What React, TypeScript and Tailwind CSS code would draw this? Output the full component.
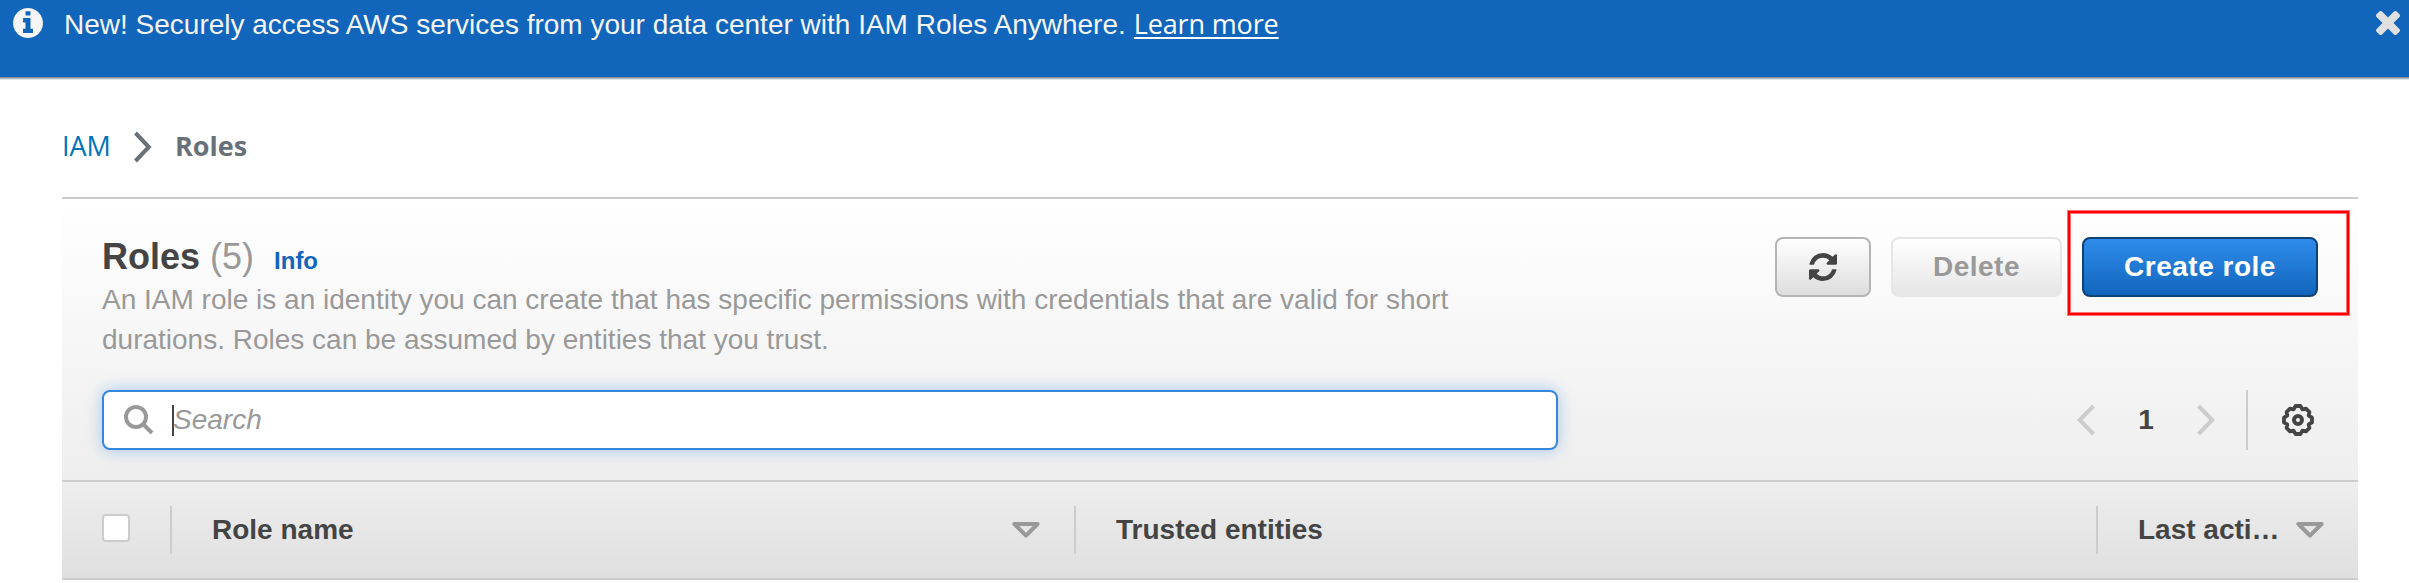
import type { ReactNode } from "react";

function InfoCircle() {
  return (
    <svg className="h-[30px] w-[30px] shrink-0" viewBox="128 128 1536 1536" fill="#f5f5f5">
      <path d="M1152 1376v-160q0-14-9-23t-23-9h-96v-512q0-14-9-23t-23-9h-320q-14 0-23 9t-9 23v160q0 14 9 23t23 9h96v320h-96q-14 0-23 9t-9 23v160q0 14 9 23t23 9h448q14 0 23-9t9-23zm-128-896v-160q0-14-9-23t-23-9h-192q-14 0-23 9t-9 23v160q0 14 9 23t23 9h192q14 0 23-9t9-23zm640 416q0 209-103 385.5t-279.5 279.5-385.5 103-385.5-103-279.5-279.5-103-385.5 103-385.5 279.5-279.5 385.5-103 385.5 103 279.5 279.5 103 385.5z" />
    </svg>
  );
}

function CloseIcon() {
  return (
    <svg className="h-6 w-6" viewBox="302 366 1188 1188" fill="#e0e0e0">
      <path d="M1490 1322q0 40-28 68l-136 136q-28 28-68 28t-68-28l-294-294-294 294q-28 28-68 28t-68-28l-136-136q-28-28-28-68t28-68l294-294-294-294q-28-28-28-68t28-68l136-136q28-28 68-28t68 28l294 294 294-294q28-28 68-28t68 28l136 136q28 28 28 68t-28 68l-294 294 294 294q28 28 28 68z" />
    </svg>
  );
}

function RefreshIcon() {
  return (
    <svg className="h-7 w-7" viewBox="0 0 1536 1536" fill="#444">
      <path d="M1511 928q0 5-1 7-64 268-268 434.5t-478 166.5q-146 0-282.5-55t-243.5-157l-129 129q-19 19-45 19t-45-19-19-45v-448q0-26 19-45t45-19h448q26 0 45 19t19 45-19 45l-137 137q71 66 161 102t187 36q134 0 250-65t186-179q11-17 53-117 8-23 30-23h192q13 0 22.5 9.5t9.5 22.5zm25-800v448q0 26-19 45t-45 19h-448q-26 0-45-19t-19-45 19-45l138-138q-148-137-349-137-134 0-250 65t-186 179q-11 17-53 117-8 23-30 23h-199q-13 0-22.5-9.5t-9.5-22.5v-7q65-268 270-434.5t480-166.5q146 0 284 55.5t245 156.5l130-129q19-19 45-19t45 19 19 45z" />
    </svg>
  );
}

function Chevron({ left = false }: { left?: boolean }) {
  return (
    <svg className="h-8 w-[18px]" viewBox="0 0 18 32" fill="none" stroke="#ccc" strokeWidth="4">
      <path d={left ? "M16.5 2L2.8 16L16.5 30" : "M1.5 2L15.2 16L1.5 30"} />
    </svg>
  );
}

function GearIcon() {
  return (
    <svg className="h-8 w-8" viewBox="0 0 32 32" fill="none" stroke="#444">
      <circle cx="16" cy="16" r="4" strokeWidth="4" />
      <path
        strokeWidth="3.8"
        strokeLinejoin="round"
        d="M13.6 2H18.4L20.4 5.3L24 4.6L27.4 8L26.7 11.6L30 13.6V18.4L26.7 20.4L27.4 24L24 27.4L20.4 26.7L18.4 30H13.6L11.6 26.7L8 27.4L4.6 24L5.3 20.4L2 18.4V13.6L5.3 11.6L4.6 8L8 4.6L11.6 5.3Z"
      />
    </svg>
  );
}

function SortIcon() {
  return (
    <svg className="h-4 w-7 shrink-0" viewBox="0 0 28 16" fill="none" stroke="#999" strokeWidth="4" strokeLinejoin="round">
      <path d="M2.4 2H25.6L14 13.6Z" />
    </svg>
  );
}

function Divider() {
  return <div className="h-12 w-[2px] shrink-0 bg-[#ccc]" />;
}

function HeaderLabel({ children }: { children: ReactNode }) {
  return <span className="text-[28px] leading-8 font-bold whitespace-nowrap">{children}</span>;
}

export default function App() {
  return (
    <div className="h-[583px] w-[2409px] overflow-hidden bg-white font-['Liberation_Sans',Arial,sans-serif] text-[#444]">
      <header className="flex h-[77px] items-start justify-between bg-[#1166bb] pr-[9px] pl-[13px] shadow-[0_1px_0_#879196,0_2px_0_#b4bcc0,0_3px_0_#e4e7e8]">
        <div className="flex pt-2 text-[#f5f5f5]">
          <InfoCircle />
          <p className="mt-px ml-[21px] text-[28px] leading-8 whitespace-nowrap">
            <span>New! Securely access AWS services from your data center with IAM Roles Anywhere.</span>
            <a className="ml-2 font-['Open_Sans','Noto_Sans',sans-serif] text-[27px] leading-none tracking-[-0.15px] text-white underline decoration-2 underline-offset-3">Learn more</a>
          </p>
        </div>
        <button className="mt-[11px]" aria-label="Dismiss">
          <CloseIcon />
        </button>
      </header>

      <nav className="flex h-[120px] items-center pt-[20px] pl-[62px] font-['Open_Sans','Noto_Sans',sans-serif] text-[27px] leading-8">
        <a className="-mt-[2px] w-[71px] text-[#0073bb]">IAM</a>
        <svg className="h-8 w-[20px]" viewBox="0 0 20 32" fill="none" stroke="#687078" strokeWidth="4">
          <path d="M2.5 2L15.8 16L2.5 30" />
        </svg>
        <span className="-mt-[2px] ml-[22px] font-bold text-[#687078]">Roles</span>
      </nav>

      <main className="ml-[62px] w-[2296px] border-t-2 border-[#ccc]">
        <section className="flex h-[281px] flex-col bg-linear-to-b from-white to-[#eee] pr-10 pl-10">
          <div className="flex h-[162px] items-start justify-between pt-[38px]">
            <div className="-mt-[2px]">
              <h1 className="flex items-baseline text-[36px] leading-[44px]">
                <span className="font-bold">Roles</span>
                <span className="ml-[10px] text-[#999]">(5)</span>
                <a className="ml-5 text-2xl leading-none font-bold text-[#1166bb]">Info</a>
              </h1>
              <p className="mt-px w-[1400px] text-[28px] leading-10 text-[#999]">
                An IAM role is an identity you can create that has specific permissions with credentials that are valid for short
                <br />
                durations. Roles can be assumed by entities that you trust.
              </p>
            </div>
            <div className="flex text-[28px] font-bold tracking-[0.5px]">
              <button className="flex h-[60px] w-24 items-center justify-center rounded-lg border-2 border-[#b4b4b4] bg-linear-to-b from-white to-[#ddd]" aria-label="Refresh">
                <RefreshIcon />
              </button>
              <button className="ml-5 h-[60px] w-[171px] rounded-lg border-2 border-[#e6e6e6] bg-linear-to-b from-white to-[#e6e6e6] text-[#999]">Delete</button>
              <div className="relative ml-5">
                <button className="h-[60px] w-[236px] rounded-lg border-2 border-[#0d4276] bg-linear-to-b from-[#2e8cec] to-[#1166bb] text-white">Create role</button>
                <div className="absolute -top-[27px] -left-[15px] h-[106px] w-[283px] border-4 border-[#ff7070]">
                  <div className="absolute -inset-[3px] border-2 border-[#ff0000]" />
                </div>
              </div>
            </div>
          </div>

          <div className="mt-[29px] flex items-center justify-between">
            <div className="flex h-[60px] w-[1456px] items-center rounded-lg border-2 border-[#3388dd] bg-white pl-5 shadow-[0_0_16px_rgba(51,136,221,0.4)]">
              <svg className="h-[30px] w-[30px]" viewBox="0 0 30 30" fill="none" stroke="#999" strokeWidth="4">
                <circle cx="12" cy="12" r="10" />
                <path d="M19.5 19.5L28 28" />
              </svg>
              <span className="ml-[18px] h-[31px] w-[2px] bg-[#444]" />
              <span className="-ml-px text-[28px] leading-8 text-[#999] italic">Search</span>
            </div>
            <div className="flex items-center pr-1">
              <Chevron left />
              <span className="w-[102px] text-center text-[28px] leading-8 font-bold">1</span>
              <Chevron />
              <div className="ml-[31px] h-[60px] w-[2px] bg-[#ccc]" />
              <div className="ml-[34px]">
                <GearIcon />
              </div>
            </div>
          </div>
        </section>

        <section className="flex h-[100px] items-center border-y-2 border-[#ccc] bg-linear-to-b from-[#eee] to-[#dfdfdf] pl-10">
          <div className="-mt-1 h-7 w-7 shrink-0 rounded-[4px] border-2 border-[#ccc] bg-white" />
          <div className="ml-10 flex w-[904px] items-center">
            <Divider />
            <div className="ml-10 flex w-[828px] items-center justify-between">
              <HeaderLabel>Role name</HeaderLabel>
              <SortIcon />
            </div>
          </div>
          <div className="flex w-[1022px] items-center">
            <Divider />
            <div className="ml-10">
              <HeaderLabel>Trusted entities</HeaderLabel>
            </div>
          </div>
          <Divider />
          <div className="ml-10 flex w-[186px] items-center justify-between">
            <HeaderLabel>Last acti…</HeaderLabel>
            <SortIcon />
          </div>
        </section>
      </main>
    </div>
  );
}
